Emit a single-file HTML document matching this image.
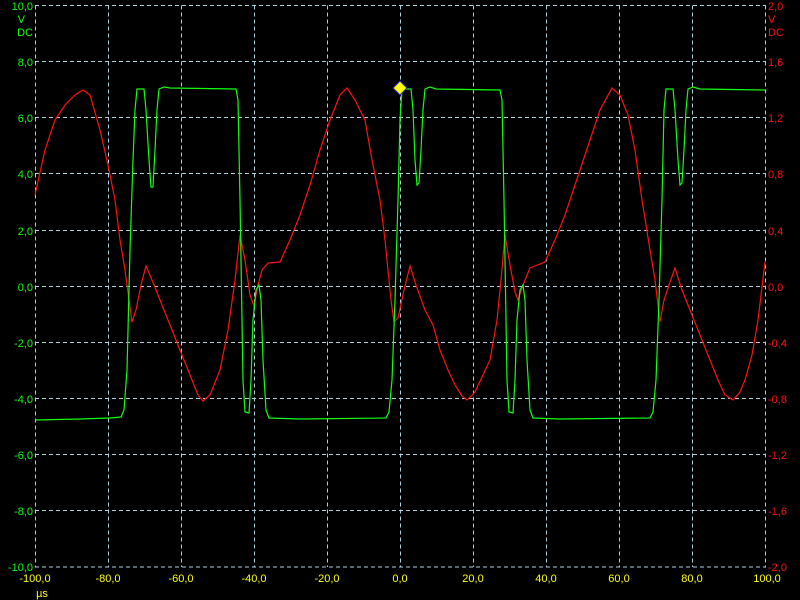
<!DOCTYPE html>
<html><head><meta charset="utf-8"><style>
html,body{margin:0;padding:0;background:#000;width:800px;height:600px;overflow:hidden}
svg{display:block}
text{font-family:"Liberation Sans",sans-serif;font-size:11px}
</style></head><body>
<svg width="800" height="600" viewBox="0 0 800 600" xmlns="http://www.w3.org/2000/svg">
<rect width="800" height="600" fill="#000"/>
<g stroke="#b0d0e0" stroke-width="1" stroke-dasharray="4,3" fill="none">
<line x1="35.5" y1="5.5" x2="35.5" y2="567"/>
<line x1="108.5" y1="5.5" x2="108.5" y2="567"/>
<line x1="181.5" y1="5.5" x2="181.5" y2="567"/>
<line x1="254.5" y1="5.5" x2="254.5" y2="567"/>
<line x1="327.5" y1="5.5" x2="327.5" y2="567"/>
<line x1="400.5" y1="5.5" x2="400.5" y2="567"/>
<line x1="473.5" y1="5.5" x2="473.5" y2="567"/>
<line x1="546.5" y1="5.5" x2="546.5" y2="567"/>
<line x1="619.5" y1="5.5" x2="619.5" y2="567"/>
<line x1="692.5" y1="5.5" x2="692.5" y2="567"/>
<line x1="765.5" y1="5.5" x2="765.5" y2="567"/>
<line x1="35" y1="5.5" x2="766" y2="5.5"/>
<line x1="35" y1="61.5" x2="766" y2="61.5"/>
<line x1="35" y1="117.5" x2="766" y2="117.5"/>
<line x1="35" y1="173.5" x2="766" y2="173.5"/>
<line x1="35" y1="230.5" x2="766" y2="230.5"/>
<line x1="35" y1="286.5" x2="766" y2="286.5"/>
<line x1="35" y1="342.5" x2="766" y2="342.5"/>
<line x1="35" y1="398.5" x2="766" y2="398.5"/>
<line x1="35" y1="454.5" x2="766" y2="454.5"/>
<line x1="35" y1="510.5" x2="766" y2="510.5"/>
<line x1="35" y1="567" x2="766" y2="567"/>
</g>
<polyline fill="none" stroke="#ff1010" stroke-width="1.2" points="35,195 45,150 55,120 65,105 75,95 83,90 90,95 100,130 108,165 115,200 120,240 125,270 129,300 132,322 136,310 141,285 146,266 152,280 160,300 170,325 180,350 190,375 198,395 203,401 210,395 220,370 228,330 235,280 240,235 245,260 250,295 254,306 258,285 262,270 268,263 280,262 290,240 300,215 310,185 320,150 330,120 340,95 347,88 355,100 365,120 372,160 380,200 385,240 388,270 391,300 394,322 398,318 404,290 410,266 416,285 425,310 433,325 440,350 448,370 455,385 462,396 467,400 475,392 490,360 497,320 501,280 505,235 510,265 515,292 518,300 523,285 530,268 545,262 555,240 565,215 580,170 590,140 600,110 612,88 620,95 628,115 635,150 642,200 650,250 655,280 660,322 664,300 669,285 675,268 682,290 690,310 700,335 710,360 718,380 725,395 733,400 740,392 745,380 752,355 758,320 765,262"/>
<polyline fill="none" stroke="#10ff10" stroke-width="1.2" points="35,420 80,419 110,418 121,417 124,410 127,370 130,250 133,160 135,110 137,89 144,89 146,110 149,160 151,187 153,187 155,150 157,110 159,89 164,87 170,88 236,89 238,100 240,200 243,380 245,412 249,413 251,380 253,320 256,290 259,285 261,300 263,360 266,410 269,418 300,419 386,418 389,412 392,380 395,300 398,200 400,120 402,89 411,89 413,110 415,160 417,185 419,183 421,150 423,110 425,89 430,87 436,89 500,90 502,100 504,200 507,380 509,412 513,413 515,380 517,320 520,290 523,285 525,300 527,360 530,410 533,418 560,419 650,418 653,412 656,380 659,300 662,200 664,110 666,89 673,89 675,110 678,160 680,185 682,183 684,150 686,110 688,89 693,87 700,89 765,90"/>
<polygon points="400,81 407,88 400,95 393,88" fill="#ffff00" stroke="#2020c0" stroke-width="1"/>
<g fill="#10ff10" text-anchor="end">
<text x="33" y="10">10,0</text><text x="25" y="23">V</text><text x="33" y="36">DC</text>
<text x="33" y="66">8,0</text><text x="33" y="122">6,0</text><text x="33" y="178">4,0</text>
<text x="33" y="235">2,0</text><text x="33" y="291">0,0</text><text x="33" y="347">-2,0</text>
<text x="33" y="403">-4,0</text><text x="33" y="459">-6,0</text><text x="33" y="515">-8,0</text>
<text x="33" y="571">-10,0</text>
</g>
<g fill="#ff1010">
<text x="768" y="10">2,0</text><text x="768" y="23">V</text><text x="768" y="36">DC</text>
<text x="768" y="66">1,6</text><text x="768" y="122">1,2</text><text x="768" y="178">0,8</text>
<text x="768" y="235">0,4</text><text x="768" y="291">0,0</text><text x="768" y="347">-0,4</text>
<text x="768" y="403">-0,8</text><text x="768" y="459">-1,2</text><text x="768" y="515">-1,6</text>
<text x="768" y="571">-2,0</text>
</g>
<g fill="#ffff10" text-anchor="middle">
<text x="35" y="582">-100,0</text><text x="108" y="582">-80,0</text><text x="181" y="582">-60,0</text>
<text x="254" y="582">-40,0</text><text x="327" y="582">-20,0</text><text x="400" y="582">0,0</text>
<text x="473" y="582">20,0</text><text x="546" y="582">40,0</text><text x="619" y="582">60,0</text>
<text x="692" y="582">80,0</text><text x="767" y="582">100,0</text>
<text x="42" y="597">µs</text>
</g>
</svg>
</body></html>
